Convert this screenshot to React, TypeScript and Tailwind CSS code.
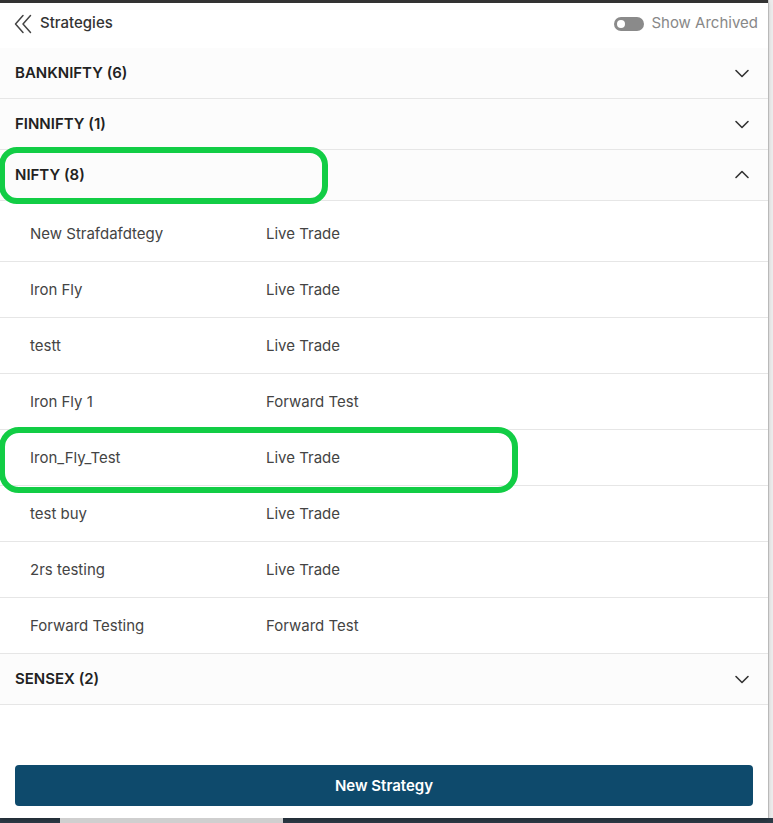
import React from "react";

const font = { fontFamily: "Inter, 'Noto Sans', sans-serif" };

function ChevronDown() {
  return (
    <svg width="16" height="16" viewBox="0 0 16 16" fill="none" stroke="#333" strokeWidth="1.6" strokeLinecap="round" strokeLinejoin="round">
      <path d="M2 5.5 8 11.5l6-6" />
    </svg>
  );
}
function ChevronUp() {
  return (
    <svg width="16" height="16" viewBox="0 0 16 16" fill="none" stroke="#333" strokeWidth="1.6" strokeLinecap="round" strokeLinejoin="round">
      <path d="M2 10.5 8 4.5l6 6" />
    </svg>
  );
}
function DoubleLeft() {
  return (
    <svg width="18" height="20" viewBox="0 0 18 20" fill="none" stroke="#444" strokeWidth="1.5" strokeLinecap="round" strokeLinejoin="round">
      <path d="M9 1.5 1.5 10 9 18.5" />
      <path d="M16.5 1.5 9 10l7.5 8.5" />
    </svg>
  );
}

const items: [string, string][] = [
  ["New Strafdafdtegy", "Live Trade"],
  ["Iron Fly", "Live Trade"],
  ["testt", "Live Trade"],
  ["Iron Fly 1", "Forward Test"],
  ["Iron_Fly_Test", "Live Trade"],
  ["test buy", "Live Trade"],
  ["2rs testing", "Live Trade"],
  ["Forward Testing", "Forward Test"],
];

function Header({ title, open }: { title: string; open?: boolean }) {
  return (
    <div className="flex h-[51px] items-center justify-between border-b border-[#e6e6e6] bg-[#fcfcfc] pl-[15px] pr-[18px]">
      <span className="text-[15px] font-semibold text-[#222]">{title}</span>
      {open ? <ChevronUp /> : <ChevronDown />}
    </div>
  );
}

export default function App() {
  return (
    <div className="relative h-[823px] w-[773px] overflow-hidden bg-[#2c3a46]" style={font}>
      <div className="flex h-[818px]">
        <div className="relative flex w-[768px] flex-col bg-white shadow-[0_2px_4px_rgba(0,0,0,0.25)]">
          <div className="h-[3px] bg-[#333]" />
          <div className="flex h-[45px] items-center justify-between pb-[4px] pl-[14px] pr-[10px]">
            <div className="flex items-center gap-[8px]">
              <DoubleLeft />
              <span className="text-[15px] font-medium text-[#333]">Strategies</span>
            </div>
            <div className="flex items-center gap-[7px]">
              <div className="flex h-[14px] w-[30px] items-center rounded-full bg-[#8a8a8a] pl-[3px]">
                <div className="h-[8px] w-[8px] rounded-full bg-white" />
              </div>
              <span className="text-[15px] text-[#888]">Show Archived</span>
            </div>
          </div>
          <Header title="BANKNIFTY (6)" />
          <Header title="FINNIFTY (1)" />
          <Header title="NIFTY (8)" open />
          <div className="pt-[5px]">
            {items.map(([n, t]) => (
              <div key={n} className="flex h-[56px] items-center border-b border-[#e6e6e6] pl-[30px] pt-[2px] text-[15px] text-[#444]">
                <span className="w-[236px]">{n}</span>
                <span>{t}</span>
              </div>
            ))}
          </div>
          <Header title="SENSEX (2)" />
          <div className="flex-1" />
          <div className="px-[15px] pb-[12px]">
            <button className="flex h-[41px] w-full items-center justify-center rounded-[4px] bg-[#0e4a6c] pt-[1px] text-[15px] font-semibold text-white">
              New Strategy
            </button>
          </div>
          <div className="pointer-events-none absolute left-[-1px] top-[147px] h-[57px] w-[329px] rounded-[18px] border-[6px] border-[#12cd45]" />
          <div className="pointer-events-none absolute left-[-1px] top-[427px] h-[66px] w-[519px] rounded-[20px] border-[6px] border-[#12cd45]" />
        </div>
        <div className="w-[5px] border-l border-[#cfcfcf] bg-[#ececec]" />
      </div>
      <div className="absolute bottom-0 left-[60px] h-[5px] w-[223px] bg-[#cfcfcf]" />
    </div>
  );
}
